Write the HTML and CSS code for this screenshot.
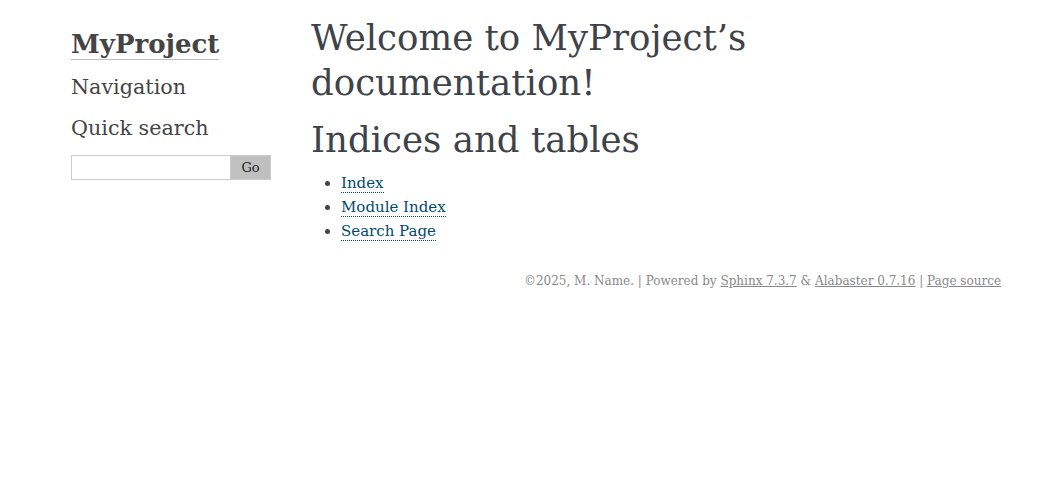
FILE: index.html
```html
<!DOCTYPE html>
<html lang="en">
<head>
<meta charset="utf-8">
<title>Welcome to MyProject’s documentation! — MyProject documentation</title>
<link rel="stylesheet" href="styles.css">
</head>
<body>
<div class="document">
  <div class="sidebar">
    <div class="sidebar-inner">
      <h1 class="logo"><a class="logo-link" href="#">MyProject</a></h1>
      <h3 class="side-title">Navigation</h3>
      <h3 class="side-title">Quick search</h3>
      <form class="search" action="#">
        <input class="search-input" type="text" name="q" aria-label="Quick search">
        <input class="search-go" type="submit" value="Go">
      </form>
    </div>
  </div>
  <div class="body">
    <h1 class="title">Welcome to MyProject’s documentation!</h1>
    <h1 class="title title-next">Indices and tables</h1>
    <ul class="links">
      <li><a class="ref" href="#">Index</a></li>
      <li><a class="ref" href="#">Module Index</a></li>
      <li><a class="ref" href="#">Search Page</a></li>
    </ul>
  </div>
</div>
<div class="footer">
  ©2025, M. Name. | Powered by <a class="foot-link" href="#">Sphinx 7.3.7</a> &amp; <a class="foot-link" href="#">Alabaster 0.7.16</a> | <a class="foot-link" href="#">Page source</a>
</div>
</body>
</html>
```
FILE: styles.css
```css
html, body {
  margin: 0;
  padding: 0;
  background: #fff;
}
body {
  font-family: "DejaVu Serif", "Liberation Serif", serif;
  font-size: 15px;
  color: #000;
}
.document {
  width: 940px;
  margin: 15px auto 0 auto;
  display: flex;
}
.sidebar {
  width: 220px;
  flex: none;
  font-size: 13px;
  line-height: 1.5;
}
.sidebar-inner {
  padding: 18px 10px;
}
.logo {
  margin: -10px 0 4px 0;
  font-size: 26px;
  line-height: 42px;
  font-weight: bold;
  color: #444;
}
.logo-link {
  color: #444;
  text-decoration: none;
  border-bottom: 1px solid #bdbdbd;
}
.side-title {
  margin: 0 0 5px 0;
  font-size: 20.7px;
  line-height: 36px;
  font-weight: normal;
  color: #444;
}
.search {
  margin: 9px 0 0 0;
  display: flex;
}
.search-input {
  width: 160px;
  height: 25px;
  box-sizing: border-box;
  border: 1px solid #ccc;
  padding: 3px;
  margin: 0;
  font-family: inherit;
  font-size: 13px;
  background: #fff;
}
.search-go {
  width: 40px;
  height: 25px;
  box-sizing: border-box;
  border: 1px solid #ccc;
  border-left: none;
  padding: 0;
  margin: 0;
  font-family: inherit;
  font-size: 13px;
  color: #222;
  background: #c0c0c0;
}
.body {
  flex: 1;
  padding: 0 30px;
  color: #3E4349;
}
.title {
  margin: 0;
  font-size: 35.6px;
  line-height: 45px;
  font-weight: normal;
}
.title-next {
  margin-top: 12px;
}
.links {
  margin: 10px 0 10px 30px;
  padding: 0;
}
.links li {
  line-height: 23.8px;
}
.ref {
  color: #004B6B;
  text-decoration: none;
  border-bottom: 1px dotted #004B6B;
}
.footer {
  width: 940px;
  margin: 20px auto 30px auto;
  font-size: 12px;
  line-height: 16px;
  color: #888;
  text-align: right;
}
.foot-link {
  color: #888;
  text-decoration: underline;
}
```
